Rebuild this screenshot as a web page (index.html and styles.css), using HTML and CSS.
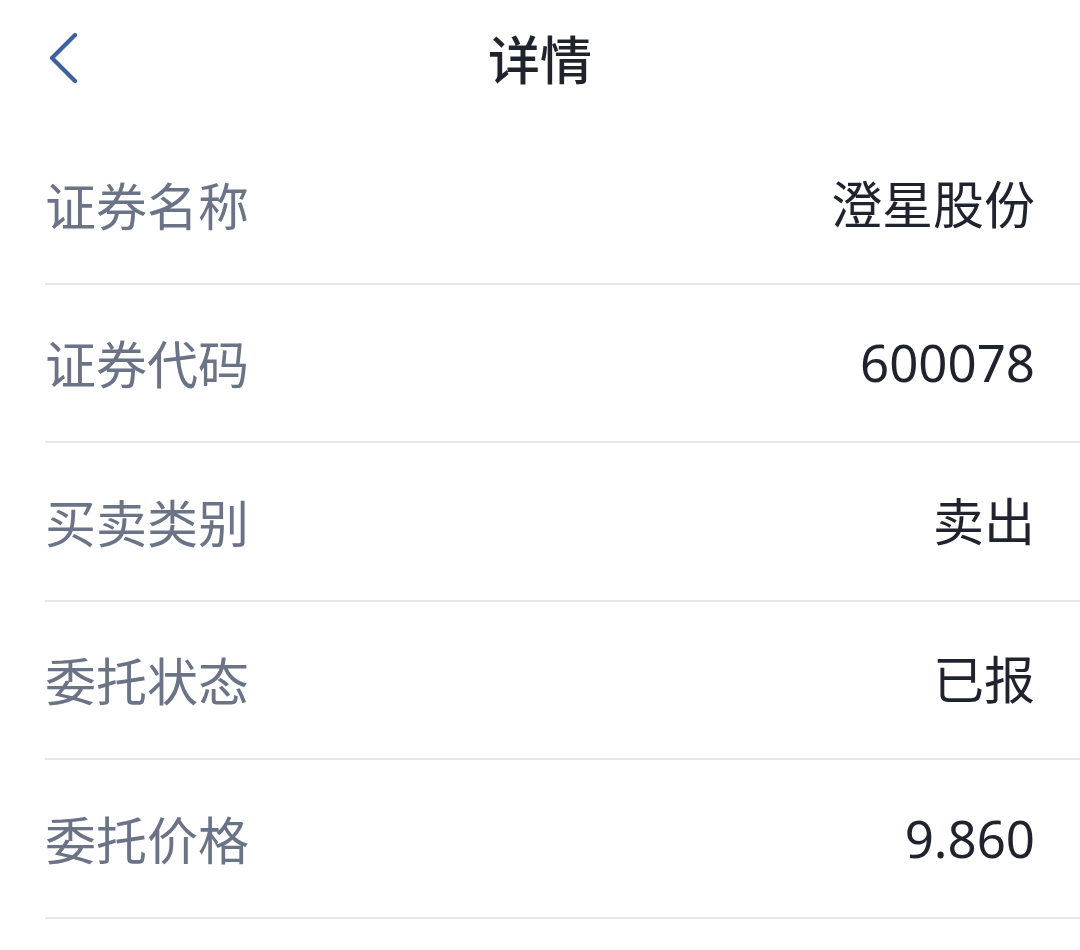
FILE: index.html
```html
<!DOCTYPE html>
<html lang="zh-CN">
<head>
<meta charset="utf-8">
<title>详情</title>
<link rel="stylesheet" href="styles.css">
</head>
<body>
<div class="page">
  <header class="nav">
    <span class="back">
      <svg width="40" height="56" viewBox="0 0 40 56" aria-hidden="true">
        <path d="M25 2 L2 25 L25 48" fill="none" stroke="#3d609f" stroke-width="4.2" stroke-linecap="round" stroke-linejoin="round"/>
      </svg>
    </span>
    <h1 class="title">详情</h1>
  </header>
  <ul class="list">
    <li class="row"><span class="label">证券名称</span><span class="value">澄星股份</span></li>
    <li class="row"><span class="label">证券代码</span><span class="value">600078</span></li>
    <li class="row"><span class="label">买卖类别</span><span class="value">卖出</span></li>
    <li class="row"><span class="label">委托状态</span><span class="value">已报</span></li>
    <li class="row"><span class="label">委托价格</span><span class="value">9.860</span></li>
  </ul>
</div>
</body>
</html>
```
FILE: styles.css
```css
html, body {
  margin: 0;
  padding: 0;
  background: #ffffff;
}
body {
  font-family: "Noto Sans CJK SC", "Noto Sans", sans-serif;
}
.page {
  width: 1080px;
  height: 950px;
  overflow: hidden;
}
.nav {
  position: relative;
  height: 116px;
  margin-bottom: 10px;
  display: flex;
  align-items: center;
  justify-content: center;
}
.back {
  position: absolute;
  left: 50px;
  top: 33px;
  width: 40px;
  height: 56px;
}
.back svg {
  display: block;
}
.title {
  margin: 0;
  font-size: 52px;
  font-weight: 500;
  color: #1f232b;
  line-height: 1;
}
.list {
  list-style: none;
  margin: 0;
  padding: 0 0 0 45px;
}
.row {
  height: 156.5px;
  border-bottom: 2px solid #e6e6e6;
  display: flex;
  align-items: center;
  justify-content: space-between;
  padding-right: 45px;
}
.label {
  font-size: 51px;
  color: #6b7386;
  line-height: 1;
}
.value {
  font-family: "Noto Sans", "Noto Sans CJK SC", sans-serif;
  font-size: 51px;
  color: #1f232d;
  line-height: 1;
}
```
